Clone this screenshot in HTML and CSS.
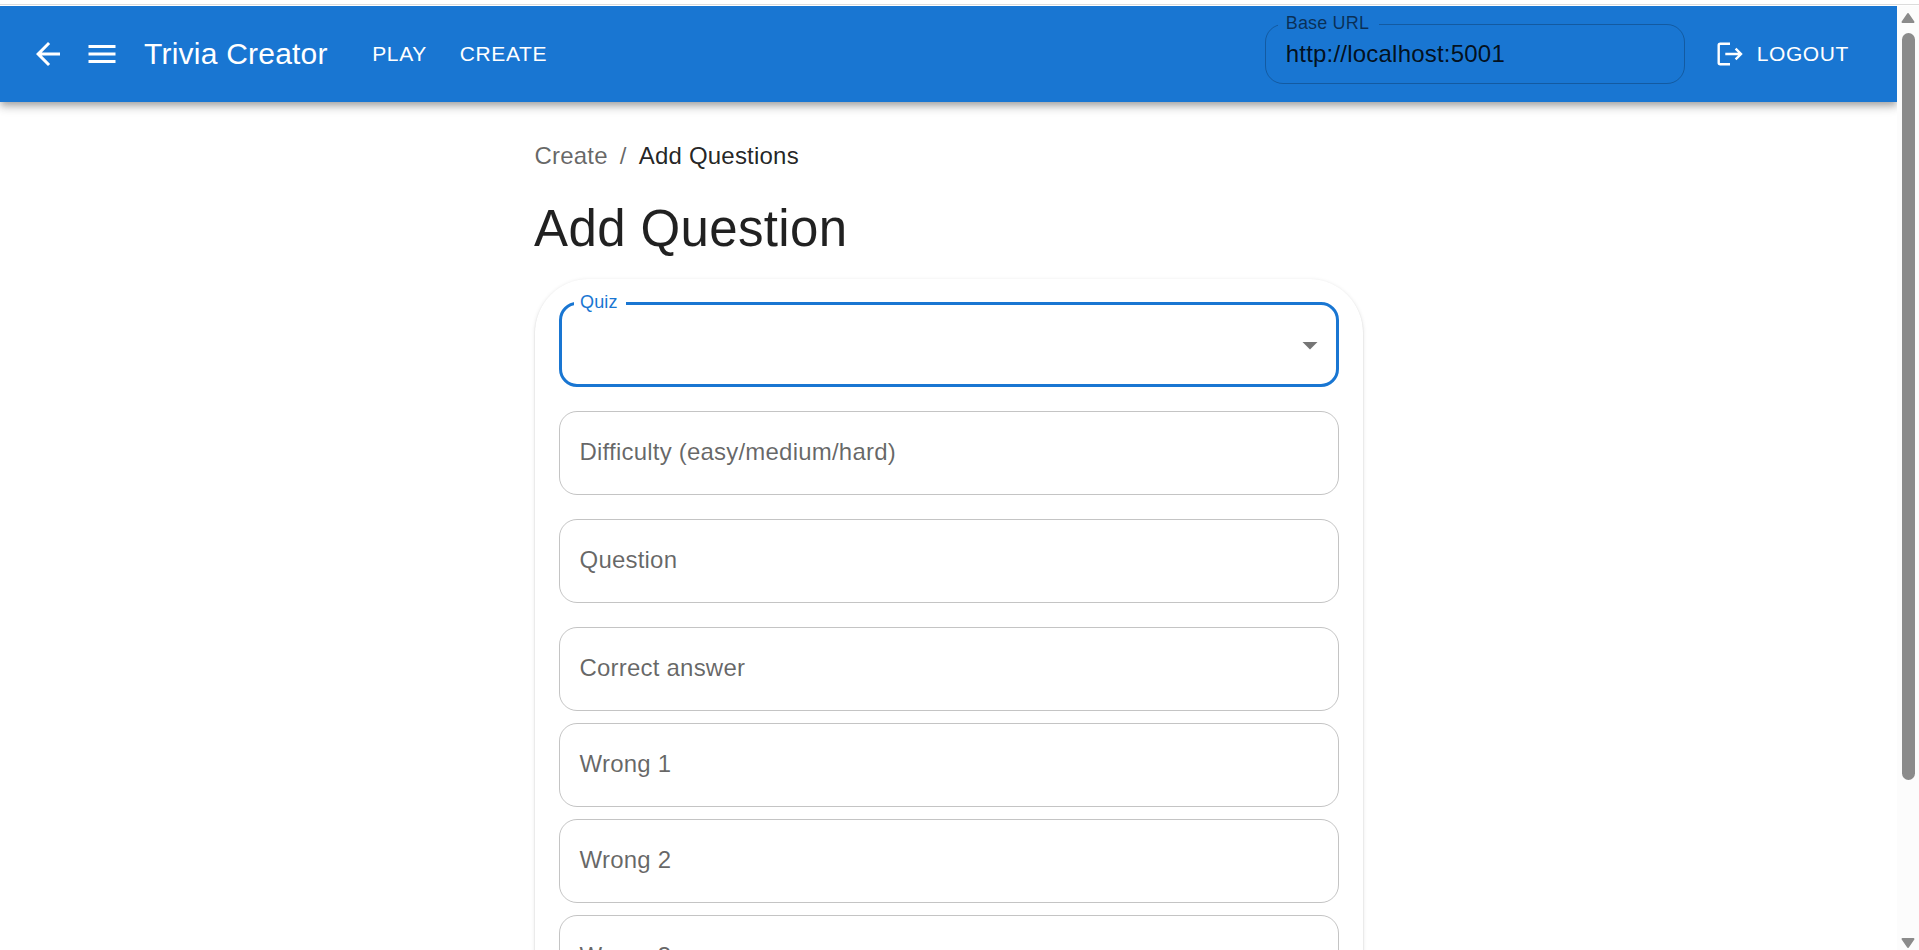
FILE: index.html
```html
<!DOCTYPE html>
<html lang="en">
<head>
<meta charset="utf-8">
<title>Trivia Creator</title>
<link rel="stylesheet" href="styles.css">
</head>
<body>
<div class="top-edge"></div>
<div class="window">
  <div class="page">
    <header class="appbar">
      <svg class="icon icon-back" viewBox="0 0 24 24"><path d="M20 11H7.83l5.59-5.59L12 4l-8 8 8 8 1.41-1.41L7.83 13H20v-2z"/></svg>
      <svg class="icon icon-menu" viewBox="0 0 24 24"><path d="M3 18h18v-2H3v2zm0-5h18v-2H3v2zm0-7v2h18V6H3z"/></svg>
      <div class="brand">Trivia Creator</div>
      <nav class="nav"><a class="nav-link">PLAY</a><a class="nav-link">CREATE</a></nav>
      <div class="url-field"><span class="notch url-label">Base URL</span><span class="url-value">http://localhost:5001</span></div>
      <div class="logout">
        <svg class="logout-icon" viewBox="0 0 26 24"><path d="M13 1.800H3.200Q1.700 1.800 1.700 3.300V20.700Q1.700 22.200 3.200 22.200H13M8.300 12H24M18.600 6.700L24 12L18.600 17.300"/></svg>
        <span class="logout-text">LOGOUT</span>
      </div>
    </header>
    <main class="content">
      <div class="crumbs"><span class="crumb">Create</span><span class="crumb">/</span><span class="crumb-current">Add Questions</span></div>
      <h1 class="title">Add Question</h1>
      <form class="card">
        <div class="field field-active">
          <span class="notch quiz-label">Quiz</span>
          <svg class="arrow" viewBox="0 0 24 24"><path d="M7 10l5 5 5-5z"/></svg>
        </div>
        <div class="field">Difficulty (easy/medium/hard)</div>
        <div class="field">Question</div>
        <div class="answers">
          <div class="field">Correct answer</div>
          <div class="field">Wrong 1</div>
          <div class="field">Wrong 2</div>
          <div class="field">Wrong 3</div>
        </div>
      </form>
    </main>
  </div>
  <div class="scrollbar">
    <svg class="scroll-arrow" viewBox="0 0 14 11"><path d="M7 1.500 12.500 9.500H1.500z"/></svg>
    <div class="thumb"></div>
    <svg class="scroll-arrow" viewBox="0 0 14 11"><path d="M7 9.500 12.500 1.500H1.500z"/></svg>
  </div>
</div>
</body>
</html>
```
FILE: styles.css
```css
* { box-sizing: border-box; }
body {
  margin: 0;
  height: 950px;
  overflow: hidden;
  display: flex;
  flex-direction: column;
  background: #fff;
  font-family: "Liberation Sans", Arial, sans-serif;
  font-size: 24px;
  letter-spacing: 0.21px;
}
.top-edge { flex: none; height: 6px; border-top: 4px solid #fff; background: linear-gradient(#dcdcdc 1px, #fff 1px); }
.window { flex: 1; min-height: 0; display: flex; }
.page { flex: 1; min-width: 0; overflow: hidden; }

.appbar {
  height: 96px;
  display: flex;
  align-items: center;
  padding: 0 36px 0 30px;
  background: #1976d2;
  color: #fff;
  box-shadow: 0 3px 6px -1.5px rgba(0,0,0,.2), 0 6px 7.5px 0 rgba(0,0,0,.14), 0 1.5px 15px 0 rgba(0,0,0,.12);
}
.icon { flex: none; width: 36px; height: 36px; fill: currentColor; }
.icon-menu { margin-left: 18px; }
.brand { margin-left: 24px; font-size: 30px; letter-spacing: 0.225px; white-space: nowrap; }
.nav { display: flex; gap: 33px; margin-left: 44.5px; padding-bottom: 1px; font-size: 21px; letter-spacing: 0.6px; }
.url-field {
  position: relative;
  width: 420px;
  height: 60px;
  margin-left: auto;
  padding: 0 20px 1px;
  display: flex;
  align-items: center;
  border: 1px solid rgba(0,0,0,.23);
  border-radius: 18px;
  color: rgba(0,0,0,.87);
}
.notch { position: absolute; font-size: 18px; line-height: 20px; letter-spacing: 0.17px; }
.url-label { top: -12px; left: 12px; padding: 0 10px 0 8px; background: #1976d2; color: rgba(0,0,0,.6); }
.logout { display: flex; align-items: center; gap: 14px; margin-left: 32px; padding-right: 12px; font-size: 21px; letter-spacing: 0.6px; }
.logout-text { padding-bottom: 1px; }
.logout-icon { width: 26px; height: 24px; fill: none; stroke: currentColor; stroke-width: 2.4; }

.content { width: 828px; margin: 0 0 0 535px; padding-top: 36px; }
.crumbs { display: flex; gap: 12px; margin-left: -0.5px; line-height: 36px; color: rgba(0,0,0,.6); }
.crumb-current { color: rgba(0,0,0,.87); }
.title { margin: 23px 0 19px -1px; font-size: 51px; line-height: 63px; font-weight: 400; letter-spacing: 0.375px; color: rgba(0,0,0,.87); }
.card {
  display: flex;
  flex-direction: column;
  gap: 24px;
  padding: 24px;
  border-radius: 54px;
  box-shadow: 0 3px 1.5px -1.5px rgba(0,0,0,.2), 0 1.5px 1.5px 0 rgba(0,0,0,.14), 0 1.5px 4.5px 0 rgba(0,0,0,.12);
}
.field {
  position: relative;
  height: 84px;
  padding: 0 19.5px 2px;
  display: flex;
  align-items: center;
  border: 1px solid rgba(0,0,0,.23);
  border-radius: 18px;
  color: rgba(0,0,0,.6);
}
.field-active { height: 85px; margin-top: -1px; padding: 0 8px; border: 3px solid #1976d2; }
.quiz-label { top: -13px; left: 12px; width: 52px; padding-left: 6px; background: #fff; color: #1976d2; }
.arrow { width: 36px; height: 36px; margin-left: auto; fill: rgba(0,0,0,.54); }
.answers { display: flex; flex-direction: column; gap: 12px; }

.scrollbar { flex: none; width: 22px; padding: 6px 0 1px; display: flex; flex-direction: column; align-items: center; background: #fcfcfc; }
.scroll-arrow { width: 14px; height: 12px; fill: #8b8b8b; stroke: #8b8b8b; stroke-width: 2; stroke-linejoin: round; }
.thumb { width: 13px; height: 747px; margin: 9px 0 auto; border-radius: 7px; background: #8b8b8b; }
```
